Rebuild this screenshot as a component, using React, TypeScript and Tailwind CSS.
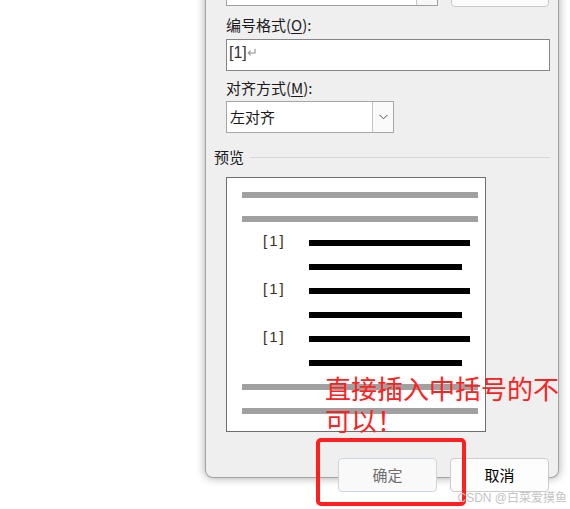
import React from "react";

const cjk = { fontFamily: '"Noto Sans CJK SC", "Noto Sans", sans-serif' };
const latin = { fontFamily: '"Liberation Sans", "Noto Sans CJK SC", sans-serif' };

const Bar = ({ w, gray }: { w: string; gray?: boolean }) => (
  <div className={`h-[6px] ${w} ${gray ? "bg-[#a0a0a0]" : "bg-black"}`} />
);

const NumberedRow = ({ num, long }: { num?: boolean; long: boolean }) => (
  <div className="flex h-[24px] items-start">
    <div className="relative h-[6px] w-[67px]">
      {num && (
        <span
          className="absolute left-[21px] top-[-9px] text-[15px] leading-[20px] tracking-[2px] text-[#3a2f24]"
          style={latin}
        >
          [1]
        </span>
      )}
    </div>
    <Bar w={long ? "w-[161px]" : "w-[153px]"} />
  </div>
);

export default function App() {
  return (
    <div className="relative h-[509px] w-[570px] overflow-hidden bg-white" style={cjk}>
      <div className="ml-[205px] h-[503px] w-[354px] rounded-b-[8px] border-x border-b border-[#a3a3a3] bg-[#efefef] pl-[20px] pr-[8px] shadow-[0_0_10px_rgba(0,0,0,0.35)]">
        {/* controls cut off at top */}
        <div className="-mt-[25px] flex items-start">
          <div className="flex h-[31px] w-[212px] justify-end border border-[#a0a0a0] bg-white">
            <div className="w-[21px] border-l border-[#c8c8c8] bg-[#f7f7f7]" />
          </div>
          <div className="ml-[13px] h-[32px] w-[98px] rounded-[4px] border border-[#c8c8c8] bg-[#fbfbfb]" />
        </div>

        <div className="mt-[8px] h-[20px] text-[15px] leading-[20px] text-[#1a1a1a]">
          编号格式(<span className="underline underline-offset-2">O</span>):
        </div>
        <div className="mt-[4px] flex h-[32px] w-[324px] items-start border border-[#858589] bg-white pl-[2px] pt-[3px]">
          <span className="text-[16px] leading-[20px] text-[#3a3030]" style={latin}>
            [1]
          </span>
          <span className="text-[13px] leading-[18px] text-[#9a9a9a]">↵</span>
        </div>

        <div className="mt-[7px] h-[20px] text-[15px] leading-[20px] text-[#1a1a1a]">
          对齐方式(<span className="underline underline-offset-2">M</span>):
        </div>
        <div className="mt-[3px] flex h-[32px] w-[168px] border border-[#a6a6a6] bg-white">
          <div className="flex flex-1 items-center pl-[3px] text-[15px] text-[#1a1a1a]">左对齐</div>
          <div className="flex w-[21px] items-center justify-center border-l border-[#c4c4c4] bg-[#fafafa]">
            <svg width="9" height="6" viewBox="0 0 9 6">
              <polyline points="0.5,0.8 4.5,4.8 8.5,0.8" fill="none" stroke="#555" strokeWidth="1" />
            </svg>
          </div>
        </div>

        <div className="-ml-[12px] mt-[14px] flex h-[20px] items-center gap-[6px]">
          <span className="text-[15px] leading-[20px] text-[#1a1a1a]">预览</span>
          <div className="h-px flex-1 bg-[#d6d6d6]" />
        </div>

        <div className="mt-[10px] h-[255px] w-[260px] border border-[#6e6e6e] bg-white pl-[15px] pt-[14px]">
          <div className="h-[24px]">
            <Bar w="w-[236px]" gray />
          </div>
          <div className="h-[24px]">
            <Bar w="w-[236px]" gray />
          </div>
          <NumberedRow num long />
          <NumberedRow long={false} />
          <NumberedRow num long />
          <NumberedRow long={false} />
          <NumberedRow num long />
          <NumberedRow long={false} />
          <div className="h-[24px]">
            <Bar w="w-[236px]" gray />
          </div>
          <div className="h-[24px]">
            <Bar w="w-[236px]" gray />
          </div>
        </div>

        <div className="mt-[26px] flex justify-end gap-[13px] pr-[1px]">
          <button className="h-[34px] w-[99px] rounded-[4px] border border-[#cdd5de] bg-[#f9f9f9] text-[15px] text-[#6e6e6e]">
            确定
          </button>
          <button className="h-[34px] w-[99px] rounded-[4px] border border-[#cccccc] bg-[#fdfdfd] text-[15px] text-black">
            取消
          </button>
        </div>
      </div>

      {/* annotation */}
      <div className="absolute left-[325px] top-[372px] text-[26px] leading-[32px] text-[#ff2020]">
        直接插入中括号的不
        <br />
        可以！
      </div>
      <div className="absolute left-[316px] top-[438px] h-[68px] w-[150px] rounded-[5px] border-4 border-[#ff1f1f]" />

      <div className="absolute bottom-[4px] right-[3px] text-[12px] leading-[14px] text-[#c4c4c4]" style={latin}>
        CSDN @白菜爱摸鱼
      </div>
    </div>
  );
}
